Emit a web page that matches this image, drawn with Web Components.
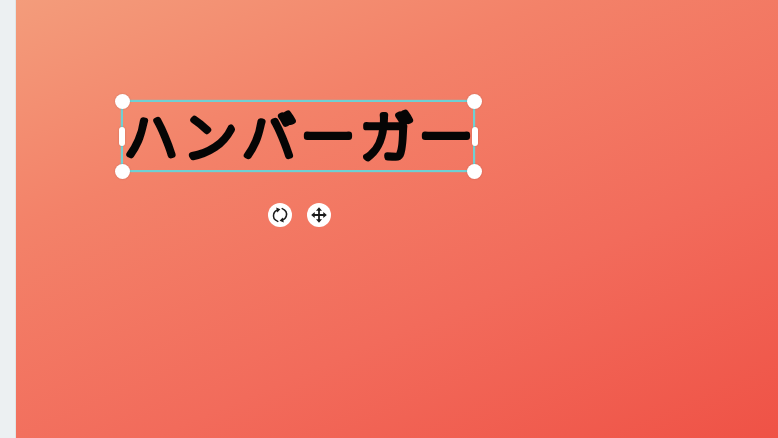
<!DOCTYPE html>
<html lang="ja"><head><meta charset="utf-8"><style>html,body{margin:0;height:100%;overflow:hidden}</style></head><body>
<editor-app></editor-app>
<template id="t-app"><style>
:host{display:flex;width:778px;height:438px;overflow:hidden}
.side{width:15px;flex:none;background:#ecf0f2;border-right:1px solid #dfe5e6}
.canvas{flex:1;position:relative;background:linear-gradient(157deg,#f39c7b 0%,#f38269 30%,#f26b5b 65%,#ef5246 100%)}
</style><div class="side"></div><div class="canvas"><slot></slot></div></template>
<template id="t-box"><style>
:host{position:absolute;left:105px;top:100px;width:354px;height:72px;box-sizing:border-box;border:2px solid #6fd0d3;box-shadow:0 0 1px #6fd0d3;display:block}
svg{position:absolute;left:0;top:0;width:350px;height:68px;overflow:visible;filter:blur(.35px)}
text{font:100 54px "Noto Sans CJK JP",sans-serif;letter-spacing:5px;fill:#050505;stroke:#050505;stroke-width:6.4px;stroke-linejoin:round;stroke-linecap:round}
.h{position:absolute;background:#fff;box-shadow:0 0 2px rgba(0,0,0,.18)}
.c{width:15px;height:15px;border-radius:50%}
.s{width:6px;height:19px;border-radius:3px;top:25px}
.tl{left:-8px;top:-8.5px}.tr{right:-9px;top:-8.5px}.bl{left:-8px;bottom:-9px}.br{right:-9px;bottom:-9px}
.l{left:-4px}.r{right:-5px}
</style><svg viewBox="0 0 350 68"><text x="1" y="55">ハンバーガー</text></svg>
<i class="h c tl"></i><i class="h c tr"></i><i class="h c bl"></i><i class="h c br"></i><i class="h s l"></i><i class="h s r"></i></template>
<template id="t-tools"><style>
:host{position:absolute;left:251.5px;top:203px;display:flex;gap:15px}
button{all:unset;width:24px;height:24px;border-radius:50%;background:#fff;display:flex;align-items:center;justify-content:center}
svg{width:18px;height:18px;fill:none;stroke:#1c1c1c;stroke-width:1.5;stroke-linecap:round;stroke-linejoin:round}
.f{fill:#1c1c1c;stroke:none}
svg.m{width:16px;height:16px}
</style>
<button><svg viewBox="0 0 18 18"><path d="M6.8 15.4C3.4 14 1.9 11 2.7 8 3.2 6 4.6 4.6 6.6 4"/><path d="M11.2 2.6C14.6 4 16.1 7 15.3 10 14.8 12 13.4 13.4 11.4 14"/><path class="f" d="M5.2 1.4 9.4 3.2 6.3 6.4ZM12.8 16.6 8.6 14.8 11.7 11.6Z"/></svg></button>
<button><svg class="m" viewBox="0 0 18 18"><path d="M9 3v12M3 9h12" stroke-width="2"/><path class="f" d="M9 .2 12.4 4.2H5.6ZM9 17.8 12.4 13.8H5.6ZM.2 9 4.2 5.6V12.4ZM17.8 9 13.8 5.6V12.4Z"/></svg></button></template>
<script>
const def=(n,t)=>customElements.define(n,class extends HTMLElement{constructor(){super();this.attachShadow({mode:'open'}).append(document.getElementById(t).content.cloneNode(true))}});
def('editor-app','t-app');def('text-box','t-box');def('box-tools','t-tools');
document.querySelector('editor-app').innerHTML='<text-box></text-box><box-tools></box-tools>';
</script></body></html>
